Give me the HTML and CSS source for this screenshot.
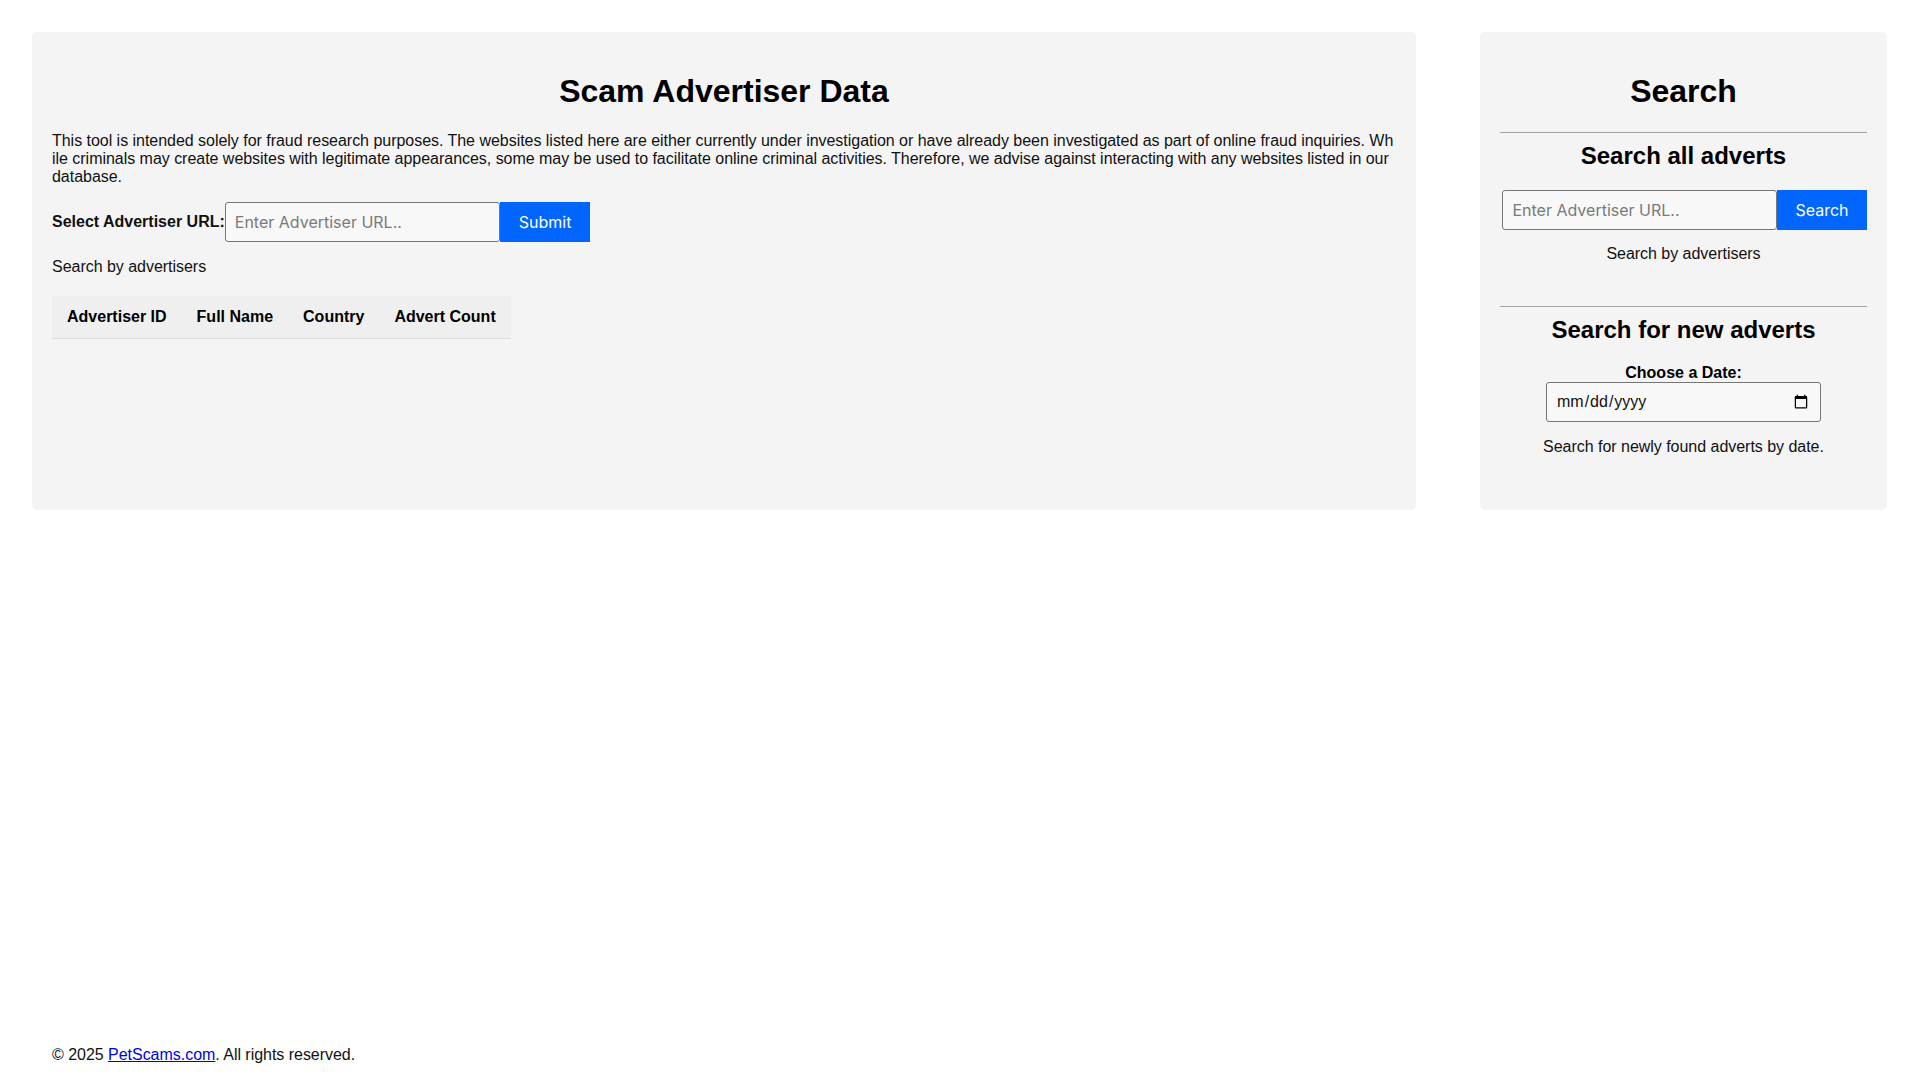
FILE: index.html
```html
<!DOCTYPE html>
<html lang="en">
<head>
<meta charset="utf-8">
<title>Scam Advertiser Data</title>
<link rel="stylesheet" href="styles.css">
</head>
<body>
<div class="page">
  <main class="layout">
    <section class="panel main-panel">
      <h1 class="panel-title">Scam Advertiser Data</h1>
      <p class="intro">This tool is intended solely for fraud research purposes. The websites listed here are either currently under investigation or have already been investigated as part of online fraud inquiries. While criminals may create websites with legitimate appearances, some may be used to facilitate online criminal activities. Therefore, we advise against interacting with any websites listed in our database.</p>
      <form class="url-form">
        <label class="field-label" for="advUrl">Select Advertiser URL:</label>
        <input class="text-input" id="advUrl" type="text" placeholder="Enter Advertiser URL..">
        <button class="btn" type="button">Submit</button>
      </form>
      <p class="hint">Search by advertisers</p>
      <table class="data-table">
        <thead>
          <tr>
            <th>Advertiser ID</th>
            <th>Full Name</th>
            <th>Country</th>
            <th>Advert Count</th>
          </tr>
        </thead>
        <tbody></tbody>
      </table>
    </section>

    <aside class="panel side-panel">
      <h1 class="panel-title">Search</h1>
      <hr class="divider">
      <div class="side-block first-block">
        <h2 class="block-title">Search all adverts</h2>
        <form class="search-form">
          <input class="text-input" type="text" placeholder="Enter Advertiser URL..">
          <button class="btn btn-side" type="button">Search</button>
        </form>
        <p class="side-hint">Search by advertisers</p>
      </div>
      <hr class="divider">
      <div class="side-block last-block">
        <h2 class="block-title">Search for new adverts</h2>
        <label class="date-label" for="dateInput">Choose a Date:</label>
        <input class="date-input" id="dateInput" type="date">
        <p class="side-hint date-hint">Search for newly found adverts by date.</p>
      </div>
    </aside>
  </main>

  <footer class="site-footer">
    &copy; 2025 <a href="#" class="footer-link">PetScams.com</a>. All rights reserved.
  </footer>
</div>
</body>
</html>
```
FILE: styles.css
```css
html, body {
  margin: 0;
  padding: 0;
  background: #ffffff;
}

body {
  font-family: "Liberation Sans", Arial, sans-serif;
  font-size: 16px;
  color: #111;
  letter-spacing: -0.03px;
}

.page {
  min-height: 100vh;
  box-sizing: border-box;
  display: flex;
  flex-direction: column;
  padding: 32px 33px 16px 32px;
}

.layout {
  flex: 1;
  display: grid;
  grid-template-columns: 1384px 1fr;
  column-gap: 64px;
  align-items: start;
}

.panel {
  background: #f4f4f4;
  border-radius: 5px;
  padding: 20px;
  box-sizing: border-box;
}

.main-panel {
  height: 478px;
}

.panel-title {
  font-size: 32px;
  line-height: 37px;
  font-weight: bold;
  text-align: center;
  margin: 21px 0 22px;
  color: #000;
  letter-spacing: 0;
}

.intro {
  margin: 0 0 16px;
  line-height: normal;
  word-break: break-all;
}

.url-form {
  display: flex;
  align-items: center;
  margin: 0;
}

.field-label {
  font-weight: bold;
  letter-spacing: 0;
}

.text-input {
  box-sizing: border-box;
  width: 275px;
  height: 40px;
  padding: 0 9px;
  margin: 0;
  font-family: "Inter", "Liberation Sans", sans-serif;
  font-size: 16px;
  letter-spacing: 0;
  color: #111;
  background: #f8f8f8;
  border: 1px solid #767676;
  border-radius: 3px;
}

.text-input::placeholder {
  color: #7a7a7a;
}

.btn {
  box-sizing: border-box;
  height: 40px;
  padding: 0 19px;
  margin: 0;
  border: none;
  border-radius: 0;
  background: #0066ff;
  color: #ffffff;
  font-family: "Inter", "Liberation Sans", sans-serif;
  font-size: 16px;
  letter-spacing: 0;
  cursor: pointer;
}

.btn-side {
  padding: 0 18px;
}

.hint {
  margin: 16px 0 0;
}

.data-table {
  margin-top: 20px;
  border-collapse: collapse;
}

.data-table th {
  background: #efefef;
  padding: 12px 15px;
  font-weight: bold;
  text-align: left;
  border-bottom: 1px solid #dcdcdc;
  color: #000;
  letter-spacing: 0;
}

.side-panel {
  text-align: center;
}

.divider {
  border: 0;
  border-top: 1px solid #a3a3a3;
  height: 0;
  margin: 0;
}

.block-title {
  font-size: 24px;
  line-height: 28px;
  font-weight: bold;
  margin: 9px 0 20px;
  color: #000;
  letter-spacing: 0;
}

.search-form {
  display: flex;
  justify-content: center;
  margin: 0 0 0 2px;
}

.side-hint {
  margin: 15px 0 0;
}

.first-block {
  padding-bottom: 43px;
}

.last-block {
  padding-bottom: 34px;
}

.last-block .block-title {
  margin-bottom: 20px;
}

.date-label {
  display: block;
  font-weight: bold;
  color: #000;
  letter-spacing: 0;
}

.date-input {
  display: block;
  box-sizing: border-box;
  width: 275px;
  height: 40px;
  margin: 0 auto;
  padding: 0 9px;
  font-family: "Liberation Sans", Arial, sans-serif;
  font-size: 16px;
  letter-spacing: 0;
  color: #111;
  background: #f8f8f8;
  border: 1px solid #767676;
  border-radius: 3px;
}

.date-hint {
  margin-top: 16px;
}

.site-footer {
  padding: 0 20px;
  line-height: normal;
}

.footer-link {
  color: #0000ee;
  text-decoration: underline;
}
```
